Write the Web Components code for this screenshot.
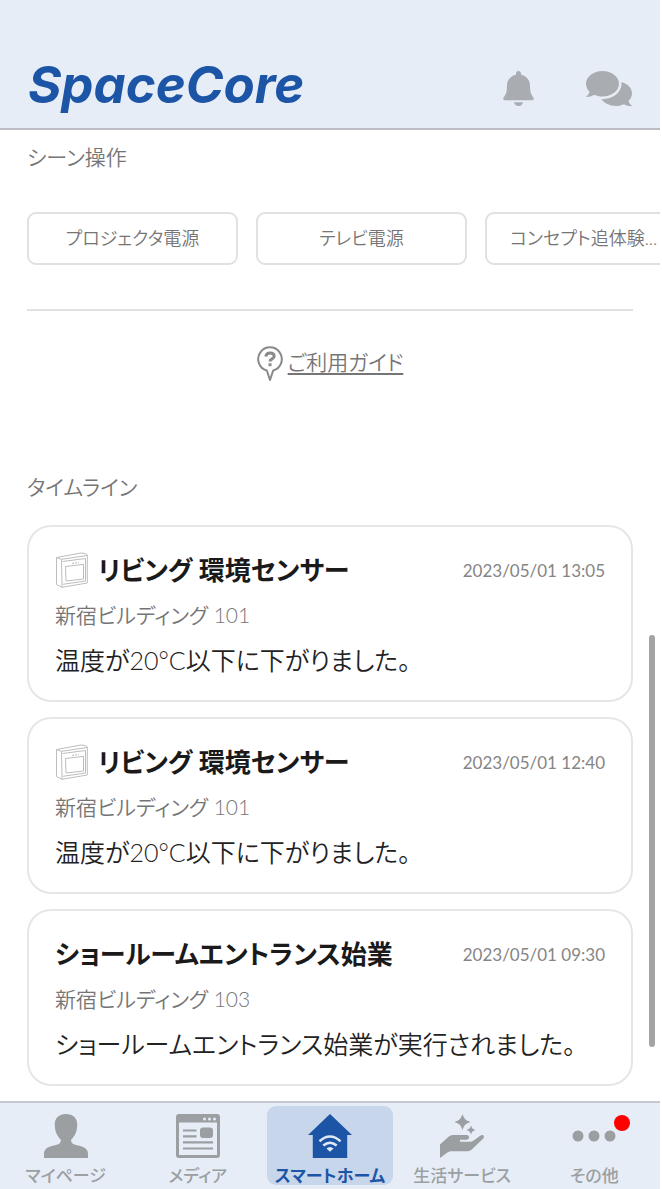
<!DOCTYPE html>
<html lang="ja">
<head>
<meta charset="UTF-8">
<meta name="viewport" content="width=device-width, initial-scale=1.0">
<title>SpaceCore</title>
<style>
  :root {
    --color-bar: #e6edf7;
    --color-brand: #1c55a6;
    --color-muted: #757575;
    --color-line: #e1e1e1;
    --side: 27px;
  }
  body {
    margin: 0;
    padding-right: 2px;
    background: #fff;
    color: #222;
    font-family: Lato, "Noto Sans CJK JP", sans-serif;
    font-weight: 350;
    font-feature-settings: "palt";
  }
</style>
</head>
<body>
<space-app>
  <app-header slot="header"></app-header>

  <section-title>シーン操作</section-title>
  <scene-list>
    <scene-button>プロジェクタ電源</scene-button>
    <scene-button>テレビ電源</scene-button>
    <scene-button truncated>コンセプト追体験...</scene-button>
  </scene-list>
  <guide-link>ご利用ガイド</guide-link>

  <section-title>タイムライン</section-title>
  <time-line></time-line>

  <tab-bar slot="footer">
    <tab-item icon="user">マイページ</tab-item>
    <tab-item icon="media">メディア</tab-item>
    <tab-item icon="home" active>スマートホーム</tab-item>
    <tab-item icon="service">生活サービス</tab-item>
    <tab-item icon="more" badge>その他</tab-item>
  </tab-bar>
</space-app>

<script>
// --- Icons ---
const icons = {
  bell: `<svg width="31" height="36" viewBox="0 0 31 36" fill="currentColor" aria-hidden="true">
    <path d="M15.500 0C14 0 13 1 13 2.300V3.700C7.600 4.800 4 8.900 4 14.500C4 20.500 3 23.500 .8 26.200C-.3 27.600 .2 29.200 1.600 29.200H29.400C30.800 29.200 31.300 27.600 30.200 26.200C28 23.500 27 20.500 27 14.500C27 8.900 23.400 4.800 18 3.700V2.300C18 1 17 0 15.500 0Z"/>
    <path d="M11 31.200H20C19.700 33.600 17.900 35 15.500 35S11.300 33.600 11 31.200Z"/>
  </svg>`,
  chat: `<svg width="46" height="36" viewBox="0 0 46 36" fill="currentColor" aria-hidden="true">
    <path d="M16.500 0C7.400 0 0 5.700 0 12.800C0 15.900 1.400 18.700 3.600 20.900C3 22.800 1.800 24.200 .5 25.200C.1 25.600 .3 26 .8 26C3.900 26 6.500 24.900 8.200 23.800C10.700 25 13.500 25.600 16.500 25.600C25.600 25.600 33 19.900 33 12.800S25.600 0 16.500 0Z"/>
    <path d="M35.400 11.300C41.500 12.500 46 17 46 22.300C46 25.300 44.700 27.900 42.500 30C43.100 31.900 44.200 33.400 45.600 34.400C46 34.800 45.800 35.200 45.300 35.200C42.300 35.200 39.800 34.200 37.900 33.200C35.500 34.300 32.800 35 30 35C23.600 35 18 32.200 15.300 28.100C26.300 28.600 35.500 21.700 35.500 12.800Z"/>
  </svg>`,
  pin: `<svg width="26" height="36" viewBox="0 0 26 36" fill="none" stroke="#8a8a8a" aria-hidden="true">
    <path stroke-width="2" stroke-linejoin="round" d="M9.800 24.500A11.800 11.800 0 1 1 16.200 24.500L13 34Z"/>
    <path stroke-width="3" d="M8.800 10.600C9.200 8.200 10.800 7 13 7C15.500 7 17.200 8.300 17.200 10.200C17.200 13.100 13 12.600 13 15.600"/>
    <path stroke-width="3" d="M13 17.300V20.200"/>
  </svg>`,
  sensor: `<svg width="34" height="36" viewBox="0 0 34 36" fill="none" stroke="#bdbdbd" stroke-width="1" stroke-linejoin="round" aria-hidden="true">
    <path d="M1.500 5.500L26 1Q31 1 32.300 2.800V31L7 35.300L1.500 32.500Z"/>
    <path d="M1.500 5.500L6.500 7.300L32.300 3.500M6.500 7.300L7 35.300"/>
    <path d="M7.500 9.500L30.500 6.500V29L8 32.300"/>
    <path d="M10.500 14.500L28.500 12.300V27L11 29Z"/>
    <path d="M17 11.500L24 10.500" stroke-dasharray="2 1"/>
  </svg>`,
  user: `<svg width="44" height="44" viewBox="0 0 44 44" fill="currentColor" aria-hidden="true">
    <path d="M22 0C14.900 0 10.500 4.200 10.800 11C11 17.300 12.800 21.800 16.800 25.600C17.200 29.100 15.300 30.300 11 31.300C4.200 32.800 0 34.500 0 40V44H44V40C44 34.500 39.800 32.800 33 31.300C28.700 30.300 26.800 29.100 27.200 25.600C31.200 21.800 33 17.300 33.200 11C33.500 4.200 29.100 0 22 0Z"/>
  </svg>`,
  media: `<svg width="44" height="44" viewBox="0 0 44 44" aria-hidden="true">
    <rect x="1.500" y="1.500" width="41" height="41" rx="1.500" fill="none" stroke="currentColor" stroke-width="3"/>
    <path d="M1 1H43V8.500H1Z" fill="currentColor"/>
    <g fill="#e6edf7"><circle cx="28.500" cy="5" r="1.500"/><circle cx="33.500" cy="5" r="1.500"/><circle cx="38.500" cy="5" r="1.500"/></g>
    <rect x="24" y="13.500" width="13" height="10.500" rx="3" fill="currentColor"/>
    <path d="M7 16.500H20.500M7 22.300H20.500M7 28.300H37M7 34.500H37" stroke="currentColor" stroke-width="2.200"/>
  </svg>`,
  home: `<svg width="44" height="44" viewBox="0 0 46 46" aria-hidden="true">
    <path d="M23 0L46 22H41V46H5V22H0Z" fill="currentColor"/>
    <g fill="none" stroke="#e0e9f6" stroke-width="2.600">
      <path d="M12 28.500Q23 18.500 34 28.500"/><path d="M16 33Q23 27 30 33"/>
    </g>
    <path d="M19.300 36Q23 32.800 26.700 36L23 39.500Z" fill="#e0e9f6"/>
  </svg>`,
  service: `<svg width="44" height="44" viewBox="0 0 44 44" fill="currentColor" aria-hidden="true">
    <path d="M22.500 0C24.200 5 25.500 6.300 30.500 8C25.500 9.700 24.200 11 22.500 16C20.800 11 19.500 9.700 14.500 8C19.500 6.300 20.800 5 22.500 0Z"/>
    <path d="M31 11.500C31.900 14.300 32.700 15.100 35.500 16C32.700 16.900 31.900 17.700 31 20.500C30.100 17.700 29.300 16.900 26.500 16C29.300 15.100 30.100 14.300 31 11.500Z"/>
    <path d="M0 30.500L8.500 22.800C10 21.500 11.600 21 13.500 21H26.500C30 21 30 25.700 26.500 25.700H20V27.800H29.500C31.300 27.800 32.600 27.300 34 26.300L40.200 21.700C43.200 19.700 45.400 22.500 43 24.800L32 35.300C30.500 36.700 28.800 37.300 26.500 37.300H12.500C9.500 37.300 8 37.800 6 39.500L0 44Z"/>
  </svg>`,
  more: `<svg width="44" height="44" viewBox="0 0 44 44" fill="currentColor" aria-hidden="true">
    <circle cx="6" cy="22" r="5.500"/><circle cx="22" cy="22" r="5.500"/><circle cx="38" cy="22" r="5.500"/>
  </svg>`
};

// --- Timeline data ---
const events = [
  { title: 'リビング 環境センサー', date: '2023/05/01 13:05', place: '新宿ビルディング 101', message: '温度が20°C以下に下がりました。', icon: 'sensor' },
  { title: 'リビング 環境センサー', date: '2023/05/01 12:40', place: '新宿ビルディング 101', message: '温度が20°C以下に下がりました。', icon: 'sensor' },
  { title: 'ショールームエントランス始業', date: '2023/05/01 09:30', place: '新宿ビルディング 103', message: 'ショールームエントランス始業が実行されました。', icon: '' }
];

// --- App shell ---
class SpaceApp extends HTMLElement {
  constructor() {
    super();
    this.attachShadow({ mode: 'open' });
    this.shadowRoot.innerHTML = `
      <style>
        :host { display: flex; flex-direction: column; height: 100vh; }
        main { flex: 1; min-height: 0; position: relative; overflow: hidden; }
        .thumb {
          position: absolute;
          right: 5px;
          bottom: 54px;
          width: 6px;
          height: 412px;
          border-radius: 3px;
          background: #a3a3a3;
        }
      </style>
      <slot name="header"></slot>
      <main><slot></slot><div class="thumb"></div></main>
      <slot name="footer"></slot>
    `;
  }
}

class AppHeader extends HTMLElement {
  constructor() {
    super();
    this.attachShadow({ mode: 'open' });
    this.shadowRoot.innerHTML = `
      <style>
        :host { display: block; background: var(--color-bar); border-bottom: 2px solid #bcbdc6; }
        header {
          display: flex;
          align-items: center;
          justify-content: space-between;
          padding: 50px 28px 0;
          height: 78px;
        }
        .logo {
          padding-bottom: 8px;
          color: var(--color-brand);
          font: italic 700 51px/64px Inter, sans-serif;
          text-decoration: none;
        }
        nav { display: flex; align-items: center; gap: 52px; }
        button { display: flex; padding: 0; border: 0; background: none; color: #a9adb2; }
      </style>
      <header>
        <a class="logo" href="#">SpaceCore</a>
        <nav>
          <button type="button" aria-label="お知らせ">${icons.bell}</button>
          <button type="button" aria-label="メッセージ">${icons.chat}</button>
        </nav>
      </header>
    `;
  }
}

class SectionTitle extends HTMLElement {
  constructor() {
    super();
    this.attachShadow({ mode: 'open' });
    this.shadowRoot.innerHTML = `
      <style>
        :host { display: block; padding: 11px var(--side) 0; }
        h2 { margin: 0; font-size: 21px; line-height: 32px; font-weight: inherit; color: var(--color-muted); }
      </style>
      <h2><slot></slot></h2>
    `;
  }
}

// --- Scenes ---
class SceneList extends HTMLElement {
  constructor() {
    super();
    this.attachShadow({ mode: 'open' });
    this.shadowRoot.innerHTML = `
      <style>
        :host { display: flex; gap: 18px; padding: 39px 0 44px var(--side); overflow: hidden; }
      </style>
      <slot></slot>
    `;
  }
}

class SceneButton extends HTMLElement {
  constructor() {
    super();
    this.attachShadow({ mode: 'open' });
    this.shadowRoot.innerHTML = `
      <style>
        :host { display: block; flex: 0 0 211px; }
        button {
          width: 100%;
          padding: 12px 23px;
          border: 2px solid var(--color-line);
          border-radius: 9px;
          background: #fff;
          color: var(--color-muted);
          font: inherit;
          font-feature-settings: inherit;
          font-size: 18px;
          line-height: 25px;
          white-space: nowrap;
        }
        :host([truncated]) button { text-align: left; }
      </style>
      <button type="button"><slot></slot></button>
    `;
  }
}

class GuideLink extends HTMLElement {
  constructor() {
    super();
    this.attachShadow({ mode: 'open' });
    this.shadowRoot.innerHTML = `
      <style>
        :host {
          display: flex;
          justify-content: center;
          margin: 0 var(--side);
          padding: 35px 0 78px;
          border-top: 2px solid var(--color-line);
        }
        a { display: flex; align-items: flex-start; gap: 5px; color: var(--color-muted); font-size: 21px; line-height: 32px; text-decoration: none; }
        span { text-decoration: underline; text-underline-offset: 3px; text-decoration-thickness: 2px; }
      </style>
      <a href="#">${icons.pin}<span><slot></slot></span></a>
    `;
  }
}

// --- Timeline ---
class TimeLine extends HTMLElement {
  constructor() {
    super();
    this.attachShadow({ mode: 'open' });
  }

  connectedCallback() {
    this.shadowRoot.innerHTML = `
      <style>
        :host { display: flex; flex-direction: column; gap: 15px; padding: 22px var(--side) 16px; }
      </style>
    `;
    events.forEach(event => {
      const card = document.createElement('event-card');
      card.setAttribute('heading', event.title);
      card.setAttribute('date', event.date);
      card.setAttribute('place', event.place);
      card.setAttribute('message', event.message);
      card.setAttribute('icon', event.icon);
      this.shadowRoot.appendChild(card);
    });
  }
}

class EventCard extends HTMLElement {
  constructor() {
    super();
    this.attachShadow({ mode: 'open' });
  }

  connectedCallback() {
    const heading = this.getAttribute('heading');
    const date = this.getAttribute('date');
    const place = this.getAttribute('place');
    const message = this.getAttribute('message');
    const icon = icons[this.getAttribute('icon')] || '';

    this.shadowRoot.innerHTML = `
      <style>
        :host {
          display: flex;
          flex-direction: column;
          gap: 12px;
          padding: 25px 26px 22px;
          border: 2px solid #e6e6e6;
          border-radius: 24px;
          background: #fff;
        }
        .top { display: flex; align-items: center; gap: 9px; }
        h3 { flex: 1; margin: 0; font-size: 26px; line-height: 36px; font-weight: 700; color: #1a1a1a; }
        time { font-size: 17px; font-weight: 400; color: #858585; }
        p { margin: 0; }
        .place { font-size: 21px; line-height: 30px; color: #757575; }
        .message { font-size: 25px; line-height: 36px; }
      </style>
      <div class="top">${icon}<h3>${heading}</h3><time>${date}</time></div>
      <p class="place">${place}</p>
      <p class="message">${message}</p>
    `;
  }
}

// --- Bottom tabs ---
class TabBar extends HTMLElement {
  constructor() {
    super();
    this.attachShadow({ mode: 'open' });
    this.shadowRoot.innerHTML = `
      <style>
        :host { display: block; background: var(--color-bar); border-top: 2px solid #c6c9d0; }
        nav { display: grid; grid-template-columns: repeat(5, 1fr); gap: 7px; padding: 3px 3px 4px; }
      </style>
      <nav><slot></slot></nav>
    `;
  }
}

class TabItem extends HTMLElement {
  constructor() {
    super();
    this.attachShadow({ mode: 'open' });
  }

  connectedCallback() {
    const icon = icons[this.getAttribute('icon')];
    const badge = this.hasAttribute('badge') ? '<i></i>' : '';

    this.shadowRoot.innerHTML = `
      <style>
        :host { display: block; min-width: 0; color: #9b9fa2; }
        :host([active]) { color: var(--color-brand); }
        a {
          display: flex;
          flex-direction: column;
          align-items: center;
          gap: 7px;
          box-sizing: border-box;
          height: 79px;
          padding-top: 8px;
          border-radius: 9px;
          color: inherit;
          font-size: 17px;
          line-height: 22px;
          font-weight: 500;
          text-decoration: none;
          white-space: nowrap;
        }
        :host([active]) a { background: #c7d6eb; font-weight: 700; }
        .icon { position: relative; display: flex; }
        i {
          position: absolute;
          top: 1px;
          right: -14px;
          width: 16px;
          height: 16px;
          border-radius: 50%;
          background: #f00;
        }
      </style>
      <a href="#"><span class="icon">${icon}${badge}</span><slot></slot></a>
    `;
  }
}

customElements.define('space-app', SpaceApp);
customElements.define('app-header', AppHeader);
customElements.define('section-title', SectionTitle);
customElements.define('scene-list', SceneList);
customElements.define('scene-button', SceneButton);
customElements.define('guide-link', GuideLink);
customElements.define('event-card', EventCard);
customElements.define('time-line', TimeLine);
customElements.define('tab-bar', TabBar);
customElements.define('tab-item', TabItem);
</script>
</body>
</html>
